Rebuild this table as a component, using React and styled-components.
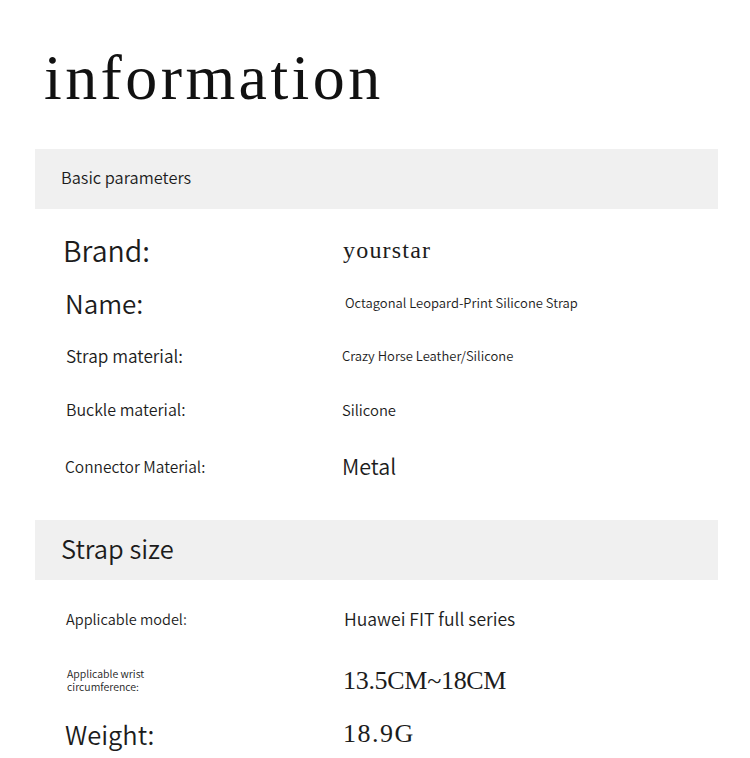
import React from "react";
import styled, { createGlobalStyle } from "styled-components";

const Global = createGlobalStyle`
  html, body { margin: 0; padding: 0; background: #ffffff; }
  body { font-family: "Noto Sans CJK SC", "Noto Sans", sans-serif; color: #222; }
`;

const Page = styled.div`
  width: 750px;
  display: flex;
  flex-direction: column;
`;

const Title = styled.h1`
  margin: 0;
  padding: 42px 0 0 44px;
  height: 111px;
  box-sizing: border-box;
  font-family: "Liberation Serif", serif;
  font-weight: 400;
  font-size: 64px;
  line-height: 72px;
  letter-spacing: 3.4px;
  color: #111;
`;

const SectionBar = styled.div`
  margin: ${(p) => p.$top}px 32px 0 35px;
  height: 60px;
  box-sizing: border-box;
  background: #f0f0f0;
  display: flex;
  align-items: center;
  padding: 0 0 ${(p) => p.$lift}px 26px;
  font-size: ${(p) => p.$size}px;
  font-weight: 350;
  color: #1c1c1c;
`;

const List = styled.div`
  display: flex;
  flex-direction: column;
  padding: ${(p) => p.$top}px 0 0 63px;
`;

const Row = styled.div`
  display: grid;
  grid-template-columns: 279px 1fr;
  align-items: center;
  height: ${(p) => p.$h}px;
`;

const Label = styled.div`
  font-size: ${(p) => p.$size}px;
  font-weight: 350;
  line-height: ${(p) => p.$lh || 1.2};
  padding-left: ${(p) => p.$dx || 0}px;
  white-space: pre-line;
  color: #1c1c1c;
`;

const Value = styled.div`
  font-family: ${(p) =>
    p.$serif ? '"Liberation Serif", serif' : '"Noto Sans CJK SC", "Noto Sans", sans-serif'};
  font-size: ${(p) => p.$size}px;
  font-weight: ${(p) => (p.$serif ? 400 : 350)};
  letter-spacing: ${(p) => p.$ls || 0}px;
  padding-left: ${(p) => p.$dx || 0}px;
  line-height: 1.2;
  color: #1c1c1c;
`;

const basic = [
  { label: "Brand:", ls: 28.5, value: "yourstar", vs: 24, serif: true, vls: 1.2, h: 54, vdx: 1 },
  { label: "Name:", ls: 26, ldx: 2, value: "Octagonal Leopard-Print Silicone Strap", vs: 13, h: 52, vdx: 3 },
  { label: "Strap material:", ls: 17.2, ldx: 3, value: "Crazy Horse Leather/Silicone", vs: 13, h: 54 },
  { label: "Buckle material:", ls: 16, ldx: 3, value: "Silicone", vs: 14.8, h: 54, vdx: -1 },
  { label: "Connector Material:", ls: 15.5, ldx: 2, value: "Metal", vs: 21.5, h: 58 },
];

const size = [
  { label: "Applicable model:", ls: 14.5, ldx: 3, value: "Huawei FIT full series", vs: 17.6, h: 52, vdx: 2 },
  { label: "Applicable wrist\ncircumference:", ls: 10.5, ldx: 4, lh: 1.2, value: "13.5CM~18CM", vs: 26, serif: true, vls: -0.3, h: 72, vdx: 1 },
  { label: "Weight:", ls: 25.5, ldx: 2, value: "18.9G", vs: 26, serif: true, vls: 1.5, h: 34, vdx: 1 },
];

const Rows = ({ items }) =>
  items.map((r) => (
    <Row key={r.label} $h={r.h}>
      <Label $size={r.ls} $dx={r.ldx} $lh={r.lh}>
        {r.label}
      </Label>
      <Value $size={r.vs} $serif={r.serif} $ls={r.vls} $dx={r.vdx}>
        {r.value}
      </Value>
    </Row>
  ));

export default function App() {
  return (
    <>
      <Global />
      <Page>
        <Title>information</Title>
        <SectionBar $top={38} $size={16.4} $lift={4}>Basic parameters</SectionBar>
        <List $top={14}>
          <Rows items={basic} />
        </List>
        <SectionBar $top={25} $size={25.5} $lift={6}>Strap size</SectionBar>
        <List $top={13}>
          <Rows items={size} />
        </List>
      </Page>
    </>
  );
}
